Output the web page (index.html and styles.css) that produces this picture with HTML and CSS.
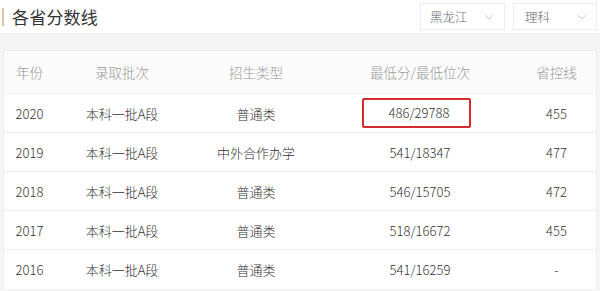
FILE: index.html
```html
<!DOCTYPE html>
<html lang="zh">
<head>
<meta charset="utf-8">
<link rel="stylesheet" href="styles.css">
</head>
<body>
<div class="top">
  <div class="title"><span class="mark"></span>各省分数线</div>
  <div class="selects">
    <div class="select sel-prov"><span>黑龙江</span><svg width="10" height="6" viewBox="0 0 10 6"><polyline points="1,1 5,5 9,1" fill="none" stroke="#c8c8c8" stroke-width="1"/></svg></div>
    <div class="select sel-type"><span>理科</span><svg width="10" height="6" viewBox="0 0 10 6"><polyline points="1,1 5,5 9,1" fill="none" stroke="#c8c8c8" stroke-width="1"/></svg></div>
  </div>
</div>
<div class="band">
  <div class="table">
    <div class="row head">
      <div>年份</div><div>录取批次</div><div>招生类型</div><div>最低分/最低位次</div><div>省控线</div>
    </div>
    <div class="row">
      <div>2020</div><div>本科一批A段</div><div>普通类</div><div><span class="hl">486/29788</span></div><div>455</div>
    </div>
    <div class="row">
      <div>2019</div><div>本科一批A段</div><div>中外合作办学</div><div>541/18347</div><div>477</div>
    </div>
    <div class="row">
      <div>2018</div><div>本科一批A段</div><div>普通类</div><div>546/15705</div><div>472</div>
    </div>
    <div class="row">
      <div>2017</div><div>本科一批A段</div><div>普通类</div><div>518/16672</div><div>455</div>
    </div>
    <div class="row last">
      <div>2016</div><div>本科一批A段</div><div>普通类</div><div>541/16259</div><div>-</div>
    </div>
  </div>
</div>
</body>
</html>
```
FILE: styles.css
```css
* { box-sizing: border-box; }
html, body { margin: 0; padding: 0; }
body {
  width: 600px;
  height: 291px;
  overflow: hidden;
  background: #f5f5f5;
  font-family: "Noto Sans CJK SC", "Microsoft YaHei", sans-serif;
  font-weight: 300;
  color: #333;
}
.top {
  height: 33px;
  background: #fff;
  display: flex;
  align-items: flex-start;
  justify-content: space-between;
}
.title {
  position: relative;
  font-size: 17px;
  line-height: 20px;
  padding: 7px 0 0 12px;
  color: #333;
  font-weight: 400;
  letter-spacing: 0.2px;
}
.mark {
  position: absolute;
  left: 2px;
  top: 8px;
  width: 2px;
  height: 18px;
  background: #e0c3a3;
}
.selects {
  display: flex;
  gap: 8px;
  padding: 3px 3px 0 0;
}
.select {
  height: 27px;
  border: 1px solid #ececec;
  background: #fff;
  display: flex;
  align-items: center;
  justify-content: space-between;
  font-size: 12.5px;
  color: #666;
}
.sel-prov { width: 85px; padding: 0 10px 0 9px; }
.sel-type { width: 84px; padding: 0 9px 0 11px; }
.band {
  padding: 17px 3px 0 3px;
}
.table {
  background: #fff;
  border: 1px solid #ececec;
  border-bottom: none;
}
.row {
  display: grid;
  grid-template-columns: 51px 134px 134px 194px 79px;
  height: 39px;
  align-items: center;
  border-bottom: 1px solid #efefef;
  font-size: 13px;
  color: #333;
}
.row > div { text-align: center; }
.row.head {
  height: 43px;
  background: #fbfbfb;
  color: #999;
  font-size: 13.5px;
}
.row.last { border-bottom: none; }
.hl {
  display: inline-block;
  width: 109px;
  height: 30px;
  line-height: 26px;
  border: 2px solid #d62a2c;
  border-radius: 2px;
  padding-left: 6px;
  margin-left: -8px;
}
```
